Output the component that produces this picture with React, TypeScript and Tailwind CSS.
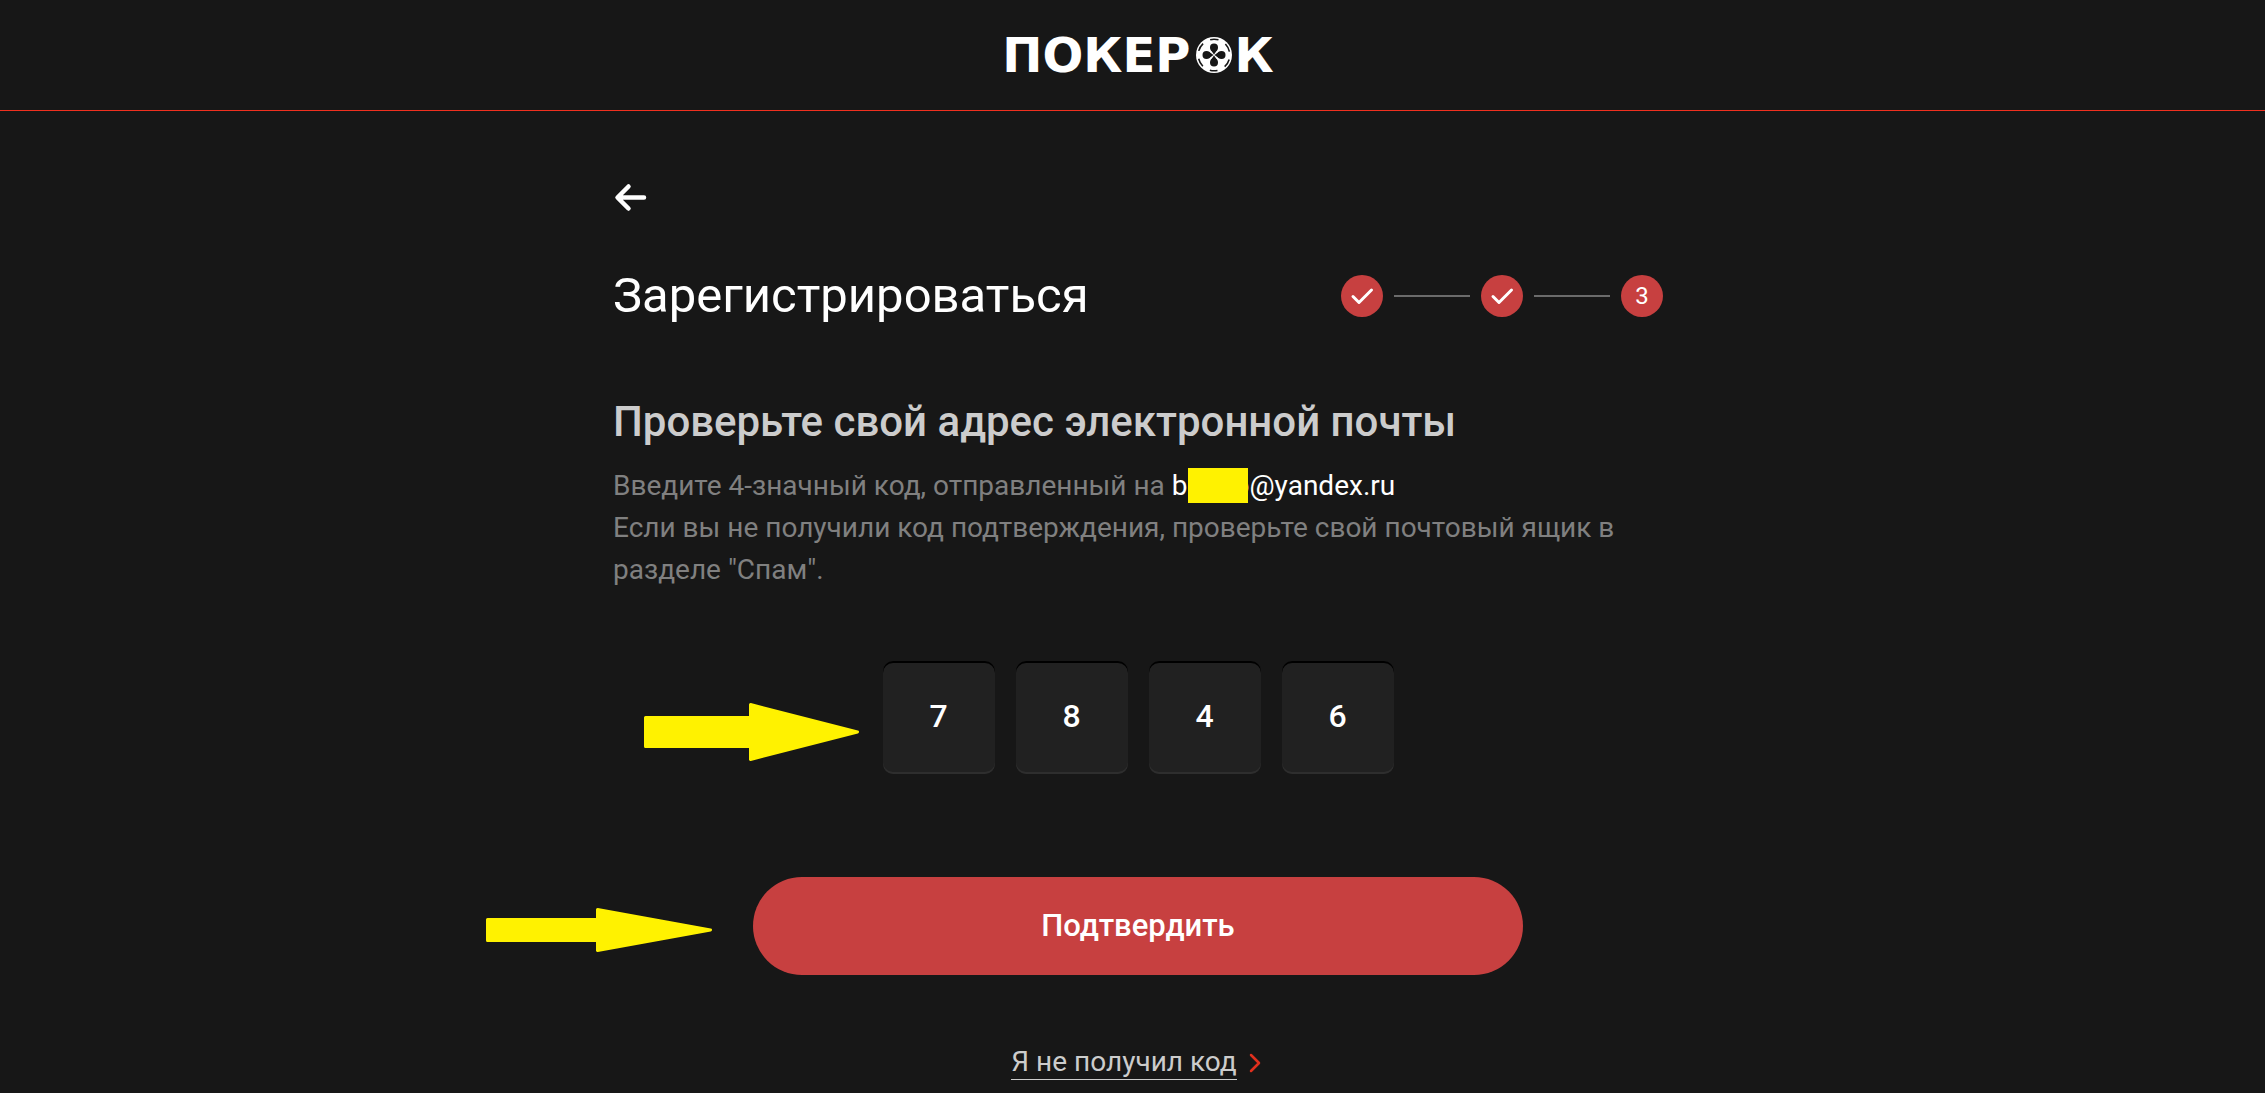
import React, { useState } from 'react';

const Logo: React.FC = () => (
  <a
    href="#"
    aria-label="ПОКЕРОК"
    className="flex items-center font-['DejaVu_Sans',sans-serif] text-[48px] leading-none font-bold text-white"
  >
    <span>ПОКЕР</span>
    <svg className="mr-0.5 ml-1.5 h-9 w-9" viewBox="0 0 36 36" fill="none">
      <circle cx="18" cy="18" r="18" fill="#fff" />
      <circle cx="18" cy="18" r="15.8" stroke="#171717" strokeWidth="1.6" strokeDasharray="8.5 8.05" strokeDashoffset="4.25" transform="rotate(90 18 18)" />
      <g fill="#171717">
        <circle cx="18" cy="10.5" r="4" />
        <circle cx="18" cy="25.5" r="4" />
        <circle cx="10.5" cy="18" r="4" />
        <circle cx="25.5" cy="18" r="4" />
        <path d="M14.8 13 18 17.500l3.200-4.500zM14.800 23l3.200-4.500 3.200 4.500zM13 14.800l4.500 3.200-4.500 3.200zM23 14.800l-4.500 3.200 4.500 3.200z" />
      </g>
    </svg>
    <span>К</span>
  </a>
);

const StepDone: React.FC = () => (
  <li className="flex h-[42px] w-[42px] items-center justify-center rounded-full bg-[#c74040]">
    <svg className="h-6 w-6" viewBox="0 0 24 24" fill="none" stroke="#fff" strokeWidth="3" strokeLinecap="round" strokeLinejoin="round">
      <path d="M3 12.500 9 18.500 21.500 6" />
    </svg>
  </li>
);

const StepLine: React.FC = () => <li aria-hidden="true" className="h-0.5 w-[76px] bg-[#6b6b6b]" />;

const App: React.FC = () => {
  const [code, setCode] = useState<string[]>(['7', '8', '4', '6']);

  const handleChange = (index: number, value: string) => {
    setCode(code.map((digit, i) => (i === index ? value.slice(-1) : digit)));
  };

  return (
    <div className="min-h-screen bg-[#171717] font-['Roboto',sans-serif] text-white">
      <header className="flex h-[111px] items-center justify-center border-b border-[#f0301f] pl-[11px]">
        <Logo />
      </header>

      <main className="pl-[11px]">
        <div className="mx-auto max-w-[1050px] pt-[70px]">
          <button type="button" aria-label="Назад" className="block">
            <svg className="h-8 w-9" viewBox="0 0 36 32" fill="none" stroke="#fff" strokeWidth="4.500" strokeLinecap="round" strokeLinejoin="round">
              <path d="M31 16.500H5M15.500 5.500 4.500 16.500 15.500 27.500" />
            </svg>
          </button>

          <div className="mt-[54px] flex items-center justify-between">
            <h1 className="text-[49px] leading-[58px]">Зарегистрироваться</h1>
            <ol className="flex items-center gap-[11px]">
              <StepDone />
              <StepLine />
              <StepDone />
              <StepLine />
              <li className="flex h-[42px] w-[42px] items-center justify-center rounded-full bg-[#c74040] text-[24px]">3</li>
            </ol>
          </div>

          <h2 className="mt-[71px] text-[42px] leading-[52px] font-medium text-[#ccc]">
            Проверьте свой адрес электронной почты
          </h2>
          <p className="mt-[17px] text-[28px] leading-[42px] text-[#808080]">
            Введите 4-значный код, отправленный на{' '}
            <span className="text-white">
              b
              <span className="relative inline-block pl-[46px]">
                o
                <span className="absolute top-[3px] left-0 h-[35px] w-[60px] bg-[#fff200]" />
              </span>
              @yandex.ru
            </span>
            <br />
            Если вы не получили код подтверждения, проверьте свой почтовый ящик в разделе "Спам".
          </p>

          <form onSubmit={(e) => e.preventDefault()} className="mt-[70px] flex flex-col items-center">
            <div className="relative flex gap-[21px]">
              <svg className="absolute top-[42px] right-full mr-6 h-[58px] w-[215px]" viewBox="0 0 215 58" fill="#fff200" stroke="#fff200" strokeWidth="3" strokeLinejoin="round">
                <path d="M1.500 14.500H106.500V1.500L213.500 29 106.500 56.500V43.500H1.500z" />
              </svg>
              {code.map((digit, i) => (
                <input
                  key={i}
                  type="text"
                  inputMode="numeric"
                  aria-label={`Цифра ${i + 1}`}
                  value={digit}
                  onChange={(e) => handleChange(i, e.target.value)}
                  className="h-[113px] w-28 rounded-[10px] bg-[#212121] pb-1 text-center text-[32px] font-medium text-white shadow-[inset_0_2px_0_#000,inset_0_-2px_0_#2e2e2e] outline-none"
                />
              ))}
            </div>

            <div className="relative mt-[103px] w-full max-w-[770px]">
              <svg className="absolute top-[31px] right-full mr-[41px] h-11 w-[226px]" viewBox="0 0 226 44" fill="#fff200" stroke="#fff200" strokeWidth="3" strokeLinejoin="round">
                <path d="M1.500 11.500H111.500V1.500L224.500 22 111.500 42.500V32.500H1.500z" />
              </svg>
              <button type="submit" className="h-[98px] w-full rounded-full bg-[#c74040] text-[31px] font-medium">
                Подтвердить
              </button>
            </div>

            <a href="#" className="mt-[70px] flex items-center gap-3 text-[28px] leading-[34px] text-[#ccc]">
              <span className="border-b border-[#ccc]">Я не получил код</span>
              <svg className="h-5 w-4" viewBox="0 0 16 20" fill="none" stroke="#e0301e" strokeWidth="2.500" strokeLinecap="round" strokeLinejoin="round">
                <path d="M2 2 10 10 2 18" />
              </svg>
            </a>
          </form>
        </div>
      </main>
    </div>
  );
};

export default App;
